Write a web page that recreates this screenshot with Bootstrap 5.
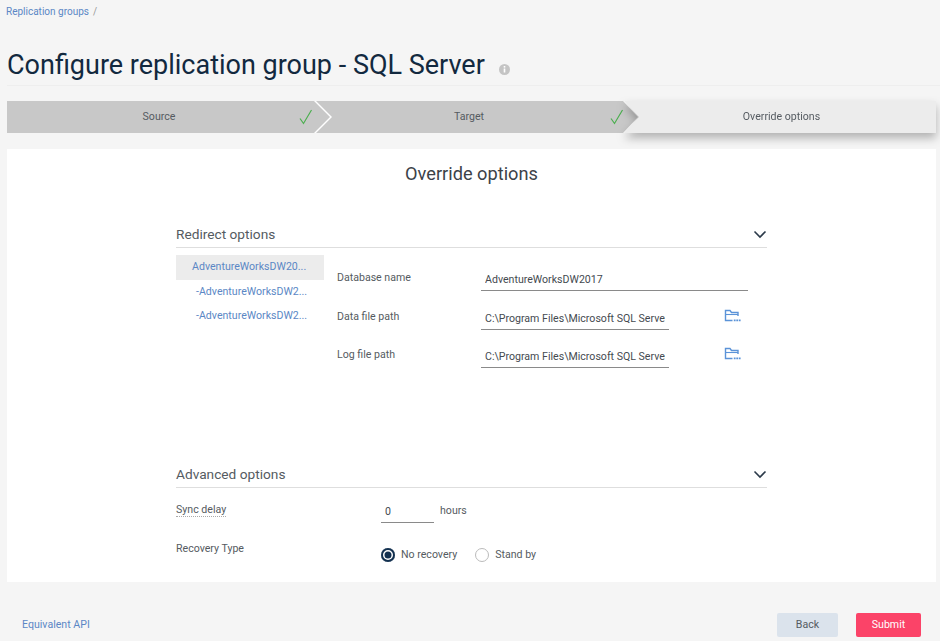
<!DOCTYPE html>
<html lang="en">
<head>
    <meta charset="UTF-8">
    <meta name="viewport" content="width=device-width, initial-scale=1.0">
    <title>Configure replication group</title>
    <link href="https://cdn.jsdelivr.net/npm/bootstrap@5.3.0/dist/css/bootstrap.min.css" rel="stylesheet">
    <style>
        body {
            background-color: #f5f5f5;
            font-family: Roboto, "Liberation Sans", sans-serif;
            font-size: 10.6px;
            color: #555b61;
            height: 641px;
            overflow: hidden;
        }
        a { color: #5b87c5; text-decoration: none; }
        .crumbs { padding: 4px 6px 0; height: 38px; margin: 0; font-size: 10px; --bs-breadcrumb-margin-bottom: 0; --bs-breadcrumb-divider-color: #999; }
        .crumbs .breadcrumb-item + .crumbs-end { padding-left: 4px; color: #999; }
        .crumbs-end { padding-left: 4px; color: #999; }
        .page-head { margin: 0 0 15px 7px; padding: 7px 0 0; border-bottom: 1px solid #eeeeee; height: 48px; display: flex; align-items: center; }
        .page-head h1 { font-family: Roboto, sans-serif; font-size: 27px; font-weight: 400; color: #12293f; margin: 0; line-height: 38px; }
        .info-dot { margin: 9px 0 0 14px; }
        .stepper { display: flex; margin: 0 4px 0 7px; height: 32px; background: #fff; }
        .step-shell { display: flex; }
        .step-shell + .step-shell { margin-left: -14px; }
        .step-shell.is-current { flex: 1; filter: drop-shadow(0 5px 5px rgba(0,0,0,.28)); }
        .step-body { background: #c8c8c8; width: 323px; display: flex; align-items: center; justify-content: center; position: relative; clip-path: polygon(0 0, 307px 0, 323px 50%, 307px 100%, 0 100%); }
        .step-shell + .step-shell .step-body { width: 322px; clip-path: polygon(0 0, 307px 0, 322px 50%, 307px 100%, 0 100%, 16px 50%); }
        .step-shell.is-current .step-body { width: 100%; background: #ececec; clip-path: polygon(0 0, 100% 0, 100% 100%, 0 100%, 15px 50%); }
        .step-body .tick { position: absolute; left: 292px; top: 8px; }
        .step-shell + .step-shell .tick { left: 294px; }
        .step-label-a { margin-right: 19px; }
        .step-label-b { margin-right: 16px; }
        .step-label-c { margin-left: 3px; }
        .main-panel { margin: 16px 4px 0 7px; height: 433px; background: #fff; padding: 14px 169px 0; }
        .main-panel h2 { font-size: 18.2px; font-weight: 400; color: #3c4248; text-align: center; margin: 0 0 37px; line-height: 21px; }
        .sect-head { display: flex; justify-content: space-between; align-items: center; height: 27px; border-bottom: 1px solid #dedede; }
        .sect-head h3 { font-size: 13.7px; font-weight: 400; color: #555b61; margin: 0; }
        .redirect { display: flex; margin-top: 7px; height: 206px; }
        .db-list { width: 148px; --bs-list-group-bg: transparent; --bs-list-group-border-width: 0; --bs-list-group-item-padding-x: 0; --bs-list-group-item-padding-y: 0; border-radius: 0; flex: none; align-self: flex-start; }
        .db-list .list-group-item { height: 24.5px; line-height: 24.5px; font-size: 10.6px; color: #5b87c5; padding-left: 20px; background: transparent; }
        .db-list .list-group-item.picked { background: #ececec; padding-left: 16px; }
        .fields { flex: 1; padding-left: 13px; padding-top: 13px; }
        .field-row { display: flex; height: 38.5px; }
        .field-row label { width: 144px; padding-top: 2px; }
        .line-input { font-family: Roboto, sans-serif; font-size: 10.6px; color: #444a50; border: 0; border-bottom: 1px solid #8a8a8a; border-radius: 0; background: transparent; padding: 1px 4px 0; height: 23px; box-shadow: none; }
        .line-input.wide { width: 267px; }
        .line-input.path { width: 188px; }
        .line-input.num { width: 53px; }
        .folder-btn { margin: 2px 0 0 55px; display: block; }
        .adv-row { display: flex; }
        .adv-first { margin-top: 12px; }
        .adv-second { margin-top: 18px; }
        .adv-row .adv-label { width: 205px; padding-top: 2px; }
        .adv-second .adv-label { padding-top: 0; }
        .dotted { border-bottom: 1px dotted #aaa; }
        .hours { margin: 3px 0 0 6px; }
        .radio-row { display: flex; gap: 18px; margin-top: 6px; }
        .radio-pick { display: flex; align-items: center; margin: 0; padding: 0; min-height: 0; }
        .radio-pick .form-check-input { float: none; margin: 0 6px 0 0; width: 14px; height: 14px; background: #fff; border: 1px solid #bbb; box-shadow: none; }
        .radio-pick .form-check-input:checked { background: #12304f; border: 0; box-shadow: inset 0 0 0 2px #12304f, inset 0 0 0 3.5px #fff; }
        .radio-pick label { color: #555b61; }
        .foot-bar { display: flex; align-items: center; justify-content: space-between; padding: 31px 19px 0 22px; }
        .foot-btn { font-size: 10.6px; height: 24px; padding: 0; border: 0; border-radius: 2px; }
        .foot-back { width: 61px; background: #dbe3ec; color: #555b61; margin-right: 18px; }
        .foot-submit { width: 65px; background: #fb4368; color: #fff; }
    </style>
</head>
<body>
    <nav aria-label="breadcrumb">
        <ol class="breadcrumb crumbs">
            <li class="breadcrumb-item"><a href="#">Replication groups</a></li>
            <li class="crumbs-end">/</li>
        </ol>
    </nav>

    <div class="page-head">
        <h1>Configure replication group - SQL Server</h1>
        <svg class="info-dot" width="11" height="11" viewBox="0 0 11 11">
            <circle cx="5.5" cy="5.5" r="5.5" fill="#c4c4c4"/>
            <rect x="4.7" y="2" width="1.6" height="1.6" fill="#fff"/>
            <rect x="4.7" y="4.5" width="1.6" height="4" fill="#fff"/>
        </svg>
    </div>

    <div class="stepper">
        <div class="step-shell">
            <div class="step-body">
                <span class="step-label-a">Source</span>
                <svg class="tick" width="14" height="16" viewBox="0 0 14 16"><path d="M1 9.5 4.5 14.500 12.500 1" fill="none" stroke="#4caf50" stroke-width="1.2"/></svg>
            </div>
        </div>
        <div class="step-shell">
            <div class="step-body">
                <span class="step-label-b">Target</span>
                <svg class="tick" width="14" height="16" viewBox="0 0 14 16"><path d="M1 9.5 4.5 14.500 12.500 1" fill="none" stroke="#4caf50" stroke-width="1.2"/></svg>
            </div>
        </div>
        <div class="step-shell is-current">
            <div class="step-body"><span class="step-label-c">Override options</span></div>
        </div>
    </div>

    <div class="main-panel">
        <h2>Override options</h2>

        <div class="sect-head">
            <h3>Redirect options</h3>
            <svg width="14" height="9" viewBox="0 0 14 9"><path d="M1.5 1.500 7 7l5.500-5.500" fill="none" stroke="#2b3a4a" stroke-width="1.6"/></svg>
        </div>
        <div class="redirect">
            <div class="list-group db-list">
                <a href="#" class="list-group-item picked">AdventureWorksDW20...</a>
                <a href="#" class="list-group-item">-AdventureWorksDW2...</a>
                <a href="#" class="list-group-item">-AdventureWorksDW2...</a>
            </div>
            <div class="fields">
                <div class="field-row">
                    <label>Database name</label>
                    <input class="form-control line-input wide" value="AdventureWorksDW2017">
                </div>
                <div class="field-row">
                    <label>Data file path</label>
                    <input class="form-control line-input path" value="C:\Program Files\Microsoft SQL Server\MSSQL14">
                    <svg class="folder-btn" width="17" height="14" viewBox="0 0 17 14">
                        <path d="M8.500 11.500H1.500V1.500H6l1.500 2H14V7" fill="none" stroke="#5b93d8" stroke-width="1.400"/>
                        <path d="M2 5.500H14" fill="none" stroke="#5b93d8" stroke-width="1.100"/>
                        <path d="M9.800 10.500h1.800v1.800H9.800zM12.300 10.500h1.800v1.800h-1.800zM14.800 10.500h1.800v1.800h-1.800z" fill="#5b93d8"/>
                    </svg>
                </div>
                <div class="field-row">
                    <label>Log file path</label>
                    <input class="form-control line-input path" value="C:\Program Files\Microsoft SQL Server\MSSQL14">
                    <svg class="folder-btn" width="17" height="14" viewBox="0 0 17 14">
                        <path d="M8.500 11.500H1.500V1.500H6l1.500 2H14V7" fill="none" stroke="#5b93d8" stroke-width="1.400"/>
                        <path d="M2 5.500H14" fill="none" stroke="#5b93d8" stroke-width="1.100"/>
                        <path d="M9.800 10.500h1.800v1.800H9.800zM12.300 10.500h1.800v1.800h-1.800zM14.800 10.500h1.800v1.800h-1.800z" fill="#5b93d8"/>
                    </svg>
                </div>
            </div>
        </div>

        <div class="sect-head">
            <h3>Advanced options</h3>
            <svg width="14" height="9" viewBox="0 0 14 9"><path d="M1.5 1.500 7 7l5.500-5.500" fill="none" stroke="#2b3a4a" stroke-width="1.6"/></svg>
        </div>
        <div class="adv-row adv-first">
            <div class="adv-label"><span class="dotted">Sync delay</span></div>
            <input class="form-control line-input num" value="0">
            <span class="hours">hours</span>
        </div>
        <div class="adv-row adv-second">
            <div class="adv-label">Recovery Type</div>
            <div class="radio-row">
                <div class="form-check radio-pick">
                    <input class="form-check-input" type="radio" name="recovery" id="noRecovery" checked>
                    <label for="noRecovery">No recovery</label>
                </div>
                <div class="form-check radio-pick">
                    <input class="form-check-input" type="radio" name="recovery" id="standBy">
                    <label for="standBy">Stand by</label>
                </div>
            </div>
        </div>
    </div>

    <div class="foot-bar">
        <a href="#">Equivalent API</a>
        <div class="d-flex">
            <button class="btn foot-btn foot-back">Back</button>
            <button class="btn foot-btn foot-submit">Submit</button>
        </div>
    </div>

    <script src="https://cdn.jsdelivr.net/npm/bootstrap@5.3.0/dist/js/bootstrap.bundle.min.js"></script>
</body>
</html>
